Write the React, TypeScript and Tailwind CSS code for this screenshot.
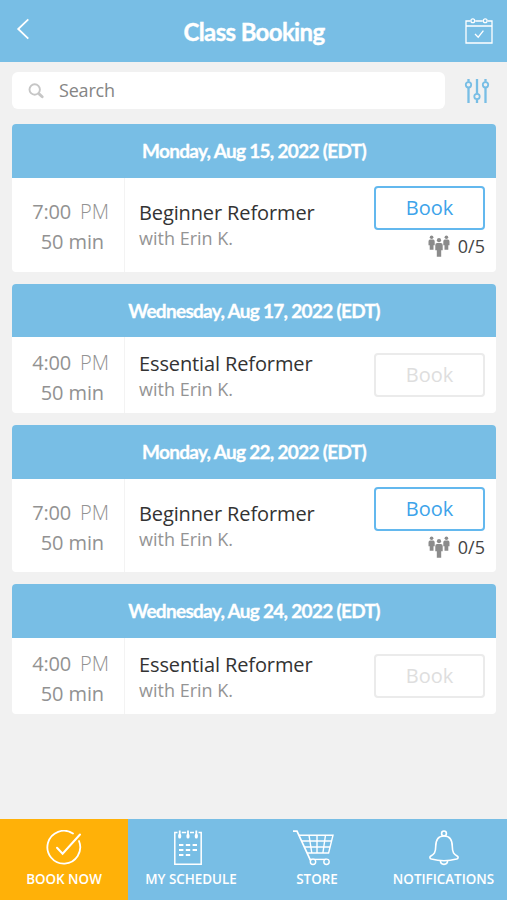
import { clsx } from 'clsx';

interface ClassSession {
  id: string;
  date: string;
  time: string;
  period: 'AM' | 'PM';
  duration: string;
  title: string;
  instructor: string;
  booked?: number;
  capacity?: number;
  bookable: boolean;
  rowClass: string;
}

const SESSIONS: ClassSession[] = [
  { id: 'aug-15', date: 'Monday, Aug 15, 2022 (EDT)', time: '7:00', period: 'PM', duration: '50 min', title: 'Beginner Reformer', instructor: 'Erin K.', booked: 0, capacity: 5, bookable: true, rowClass: 'h-[94.1px]' },
  { id: 'aug-17', date: 'Wednesday, Aug 17, 2022 (EDT)', time: '4:00', period: 'PM', duration: '50 min', title: 'Essential Reformer', instructor: 'Erin K.', bookable: false, rowClass: 'h-[75.8px]' },
  { id: 'aug-22', date: 'Monday, Aug 22, 2022 (EDT)', time: '7:00', period: 'PM', duration: '50 min', title: 'Beginner Reformer', instructor: 'Erin K.', booked: 0, capacity: 5, bookable: true, rowClass: 'h-[93.4px]' },
  { id: 'aug-24', date: 'Wednesday, Aug 24, 2022 (EDT)', time: '4:00', period: 'PM', duration: '50 min', title: 'Essential Reformer', instructor: 'Erin K.', bookable: false, rowClass: 'h-[75.7px]' },
];

const TABS = [
  { id: 'book', label: 'BOOK NOW', icon: BookIcon, iconClass: '' },
  { id: 'schedule', label: 'MY SCHEDULE', icon: ScheduleIcon, iconClass: 'pr-[7px]' },
  { id: 'store', label: 'STORE', icon: CartIcon, iconClass: 'pr-[9px]' },
  { id: 'notifications', label: 'NOTIFICATIONS', icon: BellIcon, iconClass: '' },
];

function BackIcon() {
  return (
    <svg className="h-[22px] w-3.5" viewBox="0 0 14 22" fill="none" stroke="currentColor" strokeWidth="1.8">
      <path d="M12.3 1.3 2.2 11l10.1 9.7" />
    </svg>
  );
}

function CalendarIcon() {
  return (
    <svg className="h-7 w-7" viewBox="0 0 28 28" fill="none" stroke="currentColor" strokeWidth="1.3">
      <path d="M5.3 4H1v22h26V4h-4.3M10.3 4h7.4M1 9h26" />
      <circle cx="7.8" cy="3.7" r="1.9" />
      <circle cx="20.2" cy="3.7" r="1.9" />
      <path d="m10 17 3.2 3.2 5.2-6.6" />
    </svg>
  );
}

function SearchIcon() {
  return (
    <svg className="h-4 w-4" viewBox="0 0 16 16" fill="none" stroke="currentColor">
      <circle cx="6.7" cy="6.5" r="5.2" strokeWidth="1.9" />
      <path d="m10.4 10.2 1.4 1.3" strokeWidth="1.8" />
      <path d="m11.6 11.4 2.6 2.4" strokeWidth="2.8" strokeLinecap="round" />
    </svg>
  );
}

function FilterIcon() {
  return (
    <svg className="h-[26px] w-[26px]" viewBox="0 0 26 26" fill="none" stroke="currentColor" strokeWidth="1.8">
      <path d="M4.5 1v2.7M4.5 9.8V25M13 1v14.7M13 21.3V25M21.5 1v2.7M21.5 9.8V25" strokeWidth="2.3" />
      <circle cx="4.5" cy="6.8" r="2.7" />
      <circle cx="13" cy="18.5" r="2.7" />
      <circle cx="21.5" cy="6.8" r="2.7" />
    </svg>
  );
}

function PeopleIcon() {
  return (
    <svg className="h-[22px] w-[22px]" viewBox="0 0 22 22" fill="currentColor">
      <circle cx="3.6" cy="2.2" r="1.8" />
      <path d="M.5 6.5Q.5 4.6 2.1 4.6h3Q6.7 4.6 6.7 6.5v3.7H5.5v4.6H1.7v-4.6H.5z" />
      <circle cx="18.4" cy="2.2" r="1.8" />
      <path d="M15.3 6.5q0-1.9 1.6-1.9h3q1.6 0 1.6 1.9v3.7h-1.2v4.6h-3.8v-4.6h-1.2z" />
      <circle cx="11" cy="5.2" r="2.1" />
      <path d="M7.3 10q0-2.1 1.9-2.1h3.6q1.9 0 1.9 2.1v5.2h-1.5V21.7H8.8v-6.5H7.3z" />
    </svg>
  );
}

function BookIcon() {
  return (
    <svg className="h-9 w-9" viewBox="0 0 36 36" fill="none" stroke="currentColor" strokeWidth="1.8" strokeLinecap="round">
      <path d="M27 3.6A16.4 16.4 0 1 0 33 11" />
      <path d="m11 17.8 5.6 5.9L34 4.5" strokeWidth="2" />
    </svg>
  );
}

function ScheduleIcon() {
  return (
    <svg className="h-9 w-7" viewBox="0 0 28 36" fill="none" stroke="currentColor" strokeWidth="1.5">
      <path d="M3.5 2.6H.8v31.6h26.4V2.6h-2.7M7.8 2.6h4.4M16 2.6h4" />
      <path d="M5.7 .5v6M14 .5v6M22.3 .5v6" strokeWidth="1.8" />
      <path d="M5.7 5.3v1.6M14 5.3v1.6M22.3 5.3v1.6" strokeWidth="3" strokeLinecap="round" />
      <path d="M5 15h4.4M11.8 15h4.4M18.6 15H23M5 20h4.4M11.8 20h4.4M18.6 20H23M5 25h4.4M11.8 25h4.4" strokeWidth="2.2" />
    </svg>
  );
}

function CartIcon() {
  return (
    <svg className="h-9 w-[42px]" viewBox="0 0 42 36" fill="none" stroke="currentColor" strokeWidth="1.4">
      <path d="M1 1.2h4L18.5 30.4" strokeWidth="1.7" />
      <path d="M7 5.2h34l-4.4 17.8H15.2M9.8 11h29.8M12.5 17h25.6M17 5.2 19.8 23M25 5.2V23M33.5 5.2 30.9 23" />
      <path d="M17.5 29.4h17" />
      <circle cx="21" cy="31.8" r="2.7" fill="#78bee5" />
      <circle cx="34.5" cy="31.8" r="2.7" fill="#78bee5" />
    </svg>
  );
}

function BellIcon() {
  return (
    <svg className="h-9 w-[30px]" viewBox="0 0 30 36" fill="none" stroke="currentColor" strokeWidth="1.6">
      <circle cx="15" cy="3.4" r="2.4" />
      <path d="M15 6C8.7 6 6.7 11 6.7 16.6c0 6-1.5 7.4-5.1 9.6-1.1.9-.9 2.4.8 2.9 7.3 1.9 17.9 1.9 25.2 0 1.7-.5 1.9-2 .8-2.9-3.6-2.2-5.1-3.6-5.1-9.6C23.3 11 21.3 6 15 6z" />
      <path d="M11.4 30.6c0 5 7.2 5 7.2 0" />
    </svg>
  );
}

function SessionCard({ session }: { session: ClassSession }) {
  return (
    <section className="overflow-hidden rounded-[4px] bg-white">
      <h2 className="flex h-[53.7px] items-center justify-center bg-[#78bee5] pt-px font-['Lato'] text-[19px] font-bold tracking-[-0.7px] text-white [-webkit-text-stroke:0.3px_white]">
        {session.date}
      </h2>
      <div className={clsx('flex', session.rowClass)}>
        <div
          className={clsx(
            'w-[113px] shrink-0 border-r border-[#f3f3f3] text-[20px] leading-[30px] text-[#929292]',
            session.bookable ? 'pt-[19px]' : 'pt-[10.5px]'
          )}
        >
          <p className="flex justify-end gap-[9px] pr-[15px]">
            <span className="tracking-[-0.2px]">{session.time}</span>
            <span className="font-light">{session.period}</span>
          </p>
          <p className="pr-5 text-right tracking-[-0.1px]">{session.duration}</p>
        </div>
        <div className={clsx('flex-1 pl-3.5', session.bookable ? 'pt-[21.5px]' : 'pt-[13px]')}>
          <h3 className="text-[20px] leading-[27px] tracking-[-0.12px] text-[#333333]">{session.title}</h3>
          <p className="text-[18px] leading-[24px] text-[#949494]">with {session.instructor}</p>
        </div>
        <div className={clsx('flex w-[111px] shrink-0 flex-col mr-[11px]', session.bookable ? 'pt-[8px]' : 'pt-4')}>
          <button
            disabled={!session.bookable}
            className={clsx(
              'h-11 rounded-[4px] border-2 text-[20px]',
              session.bookable ? 'border-[#63b8ee] text-[#3da3ea]' : 'border-[#ebebeb] text-[#dedede]'
            )}
          >
            Book
          </button>
          {session.bookable && (
            <div className="flex items-center justify-end gap-2 pt-1 text-[18px] leading-[25px] text-[#444444]">
              <span className="text-[#8b8b8b]">
                <PeopleIcon />
              </span>
              {session.booked}/{session.capacity}
            </div>
          )}
        </div>
      </div>
    </section>
  );
}

export default function App() {
  return (
    <div className="flex h-[900px] w-[507px] flex-col overflow-hidden bg-[#f1f1f1] font-['Open_Sans',sans-serif]">
      <header className="flex h-[62px] shrink-0 items-center justify-between bg-[#78bee5] pl-4 pr-[14px] text-white">
        <button aria-label="Back" className="flex w-[27px] pb-1">
          <BackIcon />
        </button>
        <h1 className="pt-0.5 font-['Lato'] text-[24px] font-bold tracking-[-0.65px] [-webkit-text-stroke:0.4px_white]">
          Class Booking
        </h1>
        <button aria-label="Calendar">
          <CalendarIcon />
        </button>
      </header>

      <div className="flex items-center gap-[19px] px-3 pt-2.5 pb-[15px]">
        <label className="flex h-[37px] w-[433px] items-center gap-[15px] rounded-md bg-white pl-4">
          <span className="text-[#c6c6c6]">
            <SearchIcon />
          </span>
          <input
            placeholder="Search"
            className="flex-1 bg-transparent text-[18px] tracking-[-0.2px] outline-none placeholder:text-[#858585]"
          />
        </label>
        <button aria-label="Filters" className="text-[#78bee5]">
          <FilterIcon />
        </button>
      </div>

      <main className="flex flex-1 flex-col gap-3 pr-[11px] pl-3">
        {SESSIONS.map((session) => (
          <SessionCard key={session.id} session={session} />
        ))}
      </main>

      <nav className="grid h-[81px] shrink-0 grid-cols-[128px_126px_126px_127px] bg-[#78bee5] text-white">
        {TABS.map((tab) => (
          <button
            key={tab.id}
            className={clsx('flex flex-col items-center pt-[11px]', tab.id === 'book' && 'bg-[#ffb108]')}
          >
            <span className={tab.iconClass}>
              <tab.icon />
            </span>
            <span className="pt-1 text-[13.4px] leading-[18px] font-semibold">{tab.label}</span>
          </button>
        ))}
      </nav>
    </div>
  );
}
